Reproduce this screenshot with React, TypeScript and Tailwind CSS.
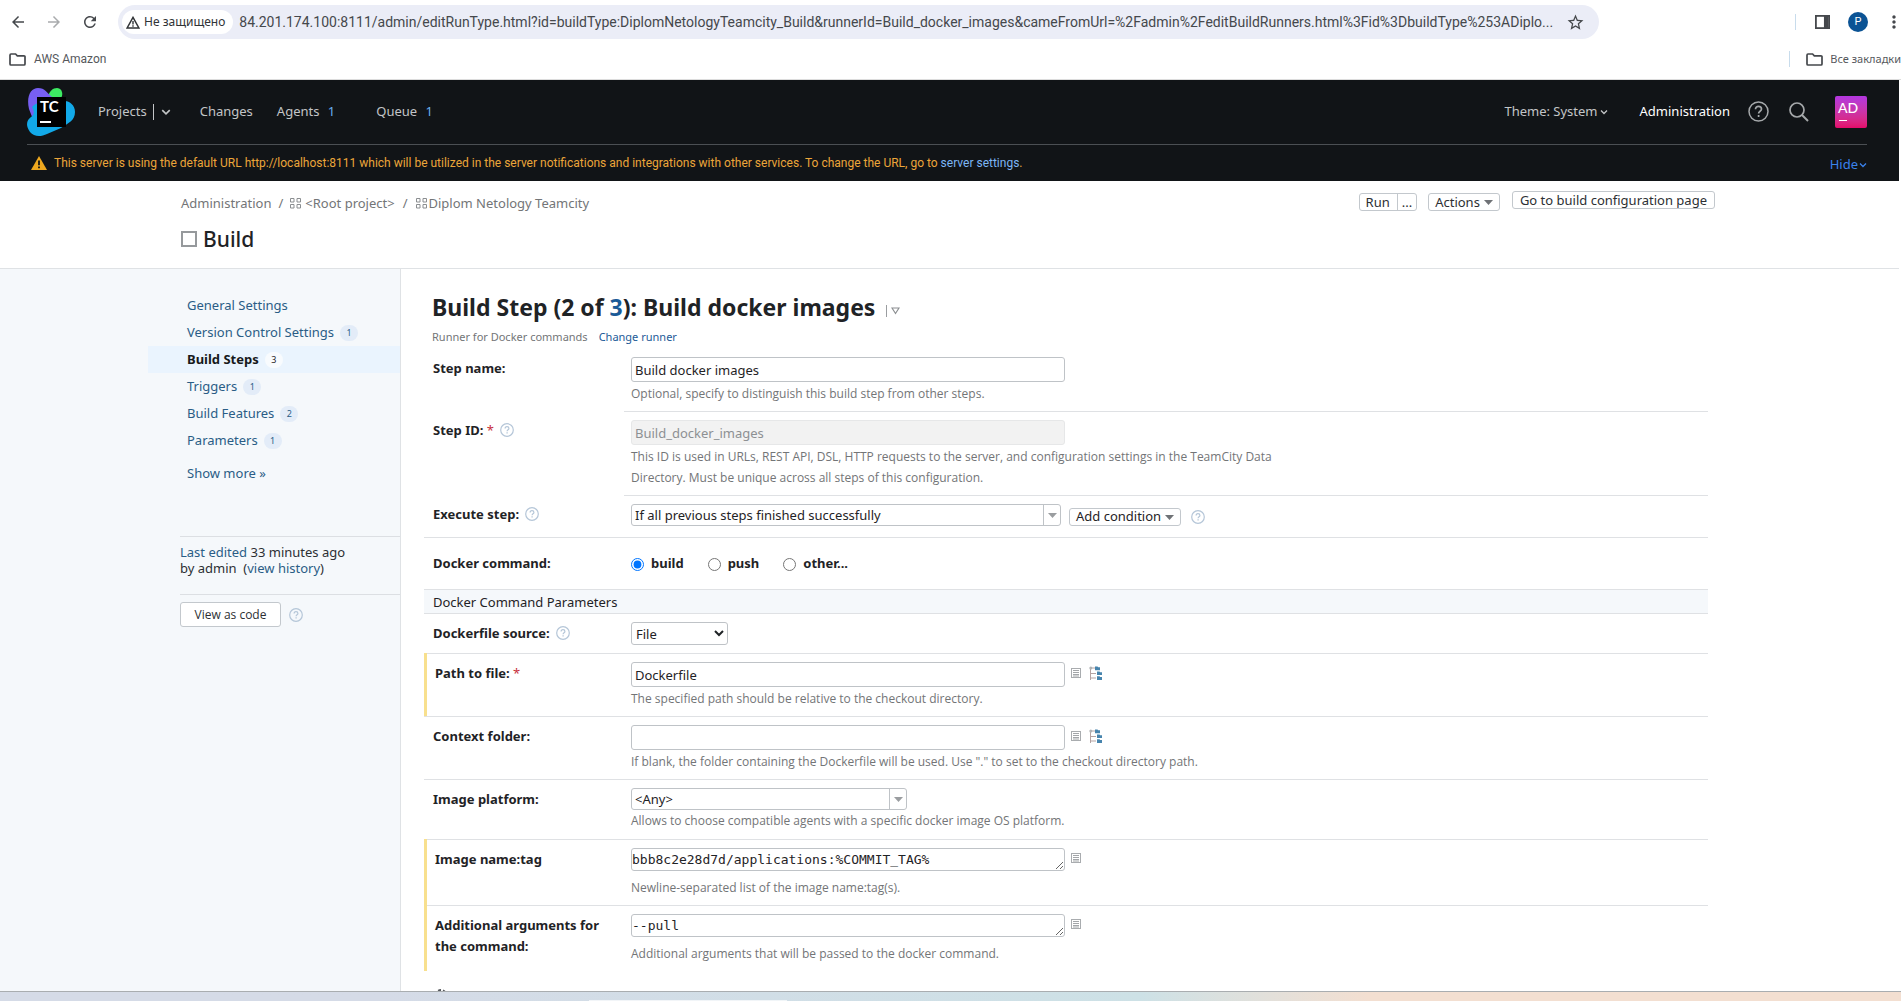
import type { ReactNode } from "react";
import { MdArrowBack, MdArrowForward, MdRefresh, MdStarBorder, MdMoreVert } from "react-icons/md";

const HINT = "font-['Open_Sans',sans-serif] text-[12px] leading-[21px] text-[#737577]";
const LINK = "text-[#2a5d86]";
const FIELD = "rounded-[3px] border border-[#bfc3c7] bg-white text-[13px] text-[#1f2326]";

function Help({ className = "" }: { className?: string }) {
  return (
    <button type="button" aria-label="Help" className={`shrink-0 ${className}`}>
      <svg width="14" height="14" viewBox="0 0 14 14" fill="none" stroke="#b5c6d8" className="block">
        <circle cx="7" cy="7" r="6.3" strokeWidth="1.2" />
        <path d="M5.1 5.6C5.1 4.4 5.9 3.7 7 3.7s1.9.7 1.9 1.7c0 1.3-1.8 1.4-1.8 2.8" strokeWidth="1.2" />
        <path d="M7.1 9.3v1.3" strokeWidth="1.3" />
      </svg>
    </button>
  );
}

function Warning({ className = "" }: { className?: string }) {
  return (
    <svg width="14" height="13" viewBox="0 0 14 13" fill="none" stroke="currentColor" className={`shrink-0 ${className}`}>
      <path d="M7 1.4 12.9 12H1.1Z" strokeWidth="1.5" strokeLinejoin="miter" />
      <path d="M7 5v3.4M7 9.3v1.4" strokeWidth="1.4" />
    </svg>
  );
}

function Folder() {
  return (
    <svg width="17" height="13" viewBox="0 0 17 13" fill="none" stroke="#45484c" strokeWidth="1.7" className="shrink-0">
      <path d="M1 2.2V11c0 .6.4 1 1 1h13c.6 0 1-.4 1-1V3.8c0-.6-.4-1-1-1H8.3L6.6 1H2c-.6 0-1 .5-1 1.2Z" />
    </svg>
  );
}

function Chevron({ size = 8, className = "" }: { size?: number; className?: string }) {
  return (
    <svg width={size} height={size} viewBox="0 0 8 8" fill="none" stroke="currentColor" strokeWidth="1.3" className={className}>
      <path d="m1 2.5 3 3 3-3" />
    </svg>
  );
}

function Caret({ className = "" }: { className?: string }) {
  return (
    <svg width="9" height="5" viewBox="0 0 9 5" fill="currentColor" className={className}>
      <path d="M0 0h9L4.5 5Z" />
    </svg>
  );
}

function Grid() {
  return (
    <svg width="12" height="11" viewBox="0 0 12 11" fill="none" stroke="#8b8e91" className="shrink-0">
      <path d="M.5.5h3.5v3.5H.5ZM7 .5h3.5v3.5H7ZM.5 6.5h3.5V10H.5ZM7 6.5h3.5V10H7Z" />
    </svg>
  );
}

function Logo() {
  return (
    <svg width="49" height="49" viewBox="0 0 49 49" role="img" aria-label="TeamCity" className="block">
      <path d="M20 11C22 3 26 0 30 0c4 0 6 4 5 8l-3 7-12-1Z" fill="#3dea62" />
      <path d="M2 21C-1 8 4 0 11 0c7 0 9 5 14 9l-4 14L7 34Z" fill="#775ff2" />
      <path d="M5 19C9 14 14 15 20 13l14 0c8-1 14 4 14 11 0 9-7 11-14 16l-14 6c-6 3-13 3-17-2-5-7-3-12 1-15 4-3 3-6 1-10Z" fill="#12a9e8" />
      <rect x="10" y="9" width="29" height="30" fill="#000" />
      <text x="13" y="24" fill="#fff" fontSize="15" fontWeight="700" fontFamily="Lato, sans-serif">TC</text>
      <rect x="13" y="33" width="11" height="2" fill="#fff" />
    </svg>
  );
}

function ListIcon() {
  return (
    <button type="button" aria-label="Insert parameter" className="shrink-0">
      <svg width="10" height="10" viewBox="0 0 10 10" fill="none" stroke="#8b8f93" className="block">
        <rect x=".5" y=".5" width="9" height="9" stroke="#a9acaf" />
        <path d="M2 2.5h6M2 4.5h6M2 6.5h6M2 8h6" strokeWidth=".8" />
      </svg>
    </button>
  );
}

function TreeIcon() {
  return (
    <button type="button" aria-label="Browse files" className="shrink-0">
      <svg width="14" height="15" viewBox="0 0 14 15" className="block">
        <path d="M1.500 3v11M1.5 7.500H7M1.500 12H7M1.500 2H6" stroke="#b5a3a2" fill="none" />
        <circle cx="1.800" cy="2" r="1.500" fill="#b0b3b5" />
        <path d="M6 .5h2.500l.7.8H11V4.300H6ZM8 5.400h2.500l.7.8H13V9H8ZM8 10.300h2.500l.7.8H13V14H8Z" fill="#4784ad" />
      </svg>
    </button>
  );
}

function Toolbar() {
  return (
    <header className="shrink-0 overflow-hidden border-b border-[#dcdcdc] bg-white font-['Roboto',sans-serif] text-[#45484c]">
      <div className="flex h-[44px] items-center">
        <nav className="flex w-[118px] shrink-0 gap-[18px] pl-[9px]">
          <button aria-label="Back"><MdArrowBack size={18} /></button>
          <button aria-label="Forward" className="text-[#a9abad]"><MdArrowForward size={18} /></button>
          <button aria-label="Reload"><MdRefresh size={18} /></button>
        </nav>
        <div className="flex h-[34px] min-w-0 flex-[1480] items-center rounded-full bg-[#ebedf7] px-1">
          <button className="flex h-6 shrink-0 items-center gap-1 rounded-full bg-white px-1 pr-2 font-['Noto_Sans',sans-serif] text-[12px] text-[#303336]">
            <Warning />
            Не защищено
          </button>
          <input
            aria-label="Address"
            readOnly
            className="ml-[6px] min-w-0 flex-1 bg-transparent text-[14px] outline-none"
            defaultValue="84.201.174.100:8111/admin/editRunType.html?id=buildType:DiplomNetologyTeamcity_Build&runnerId=Build_docker_images&cameFromUrl=%2Fadmin%2FeditBuildRunners.html%3Fid%3DbuildType%253ADiplo..."
          />
          <button aria-label="Bookmark this page" className="mr-[10px]"><MdStarBorder size={19} /></button>
        </div>
        <div className="flex min-w-0 flex-[303] items-center justify-end">
          <span className="mr-[19px] h-4 w-px bg-[#c8dcec]" />
          <button aria-label="Side panel" className="mr-[18px]">
            <svg width="15" height="14" viewBox="0 0 15 14" fill="none" stroke="#45484c" strokeWidth="1.8" className="block">
              <rect x=".9" y=".9" width="13.2" height="12.2" />
              <path d="M11.2 1v12" strokeWidth="4.5" />
            </svg>
          </button>
          <button className="mr-4 size-5 rounded-full bg-[#0b5394] text-[11px] leading-5 text-white">P</button>
          <button aria-label="Menu" className="-mr-[3px]"><MdMoreVert size={20} /></button>
        </div>
      </div>
      <div className="flex h-[35px] items-start justify-between pt-[6px] font-['Noto_Sans',sans-serif] text-[11px] leading-[18px] text-[#55585c]">
        <a href="#aws" className="flex items-center gap-2 pl-[9px] text-[12px] font-['Roboto',sans-serif]"><Folder />AWS Amazon</a>
        <a href="#all" className="flex shrink-0 items-center gap-[7px]"><span className="mr-[9px] h-4 w-px bg-[#c8dcec]" /><Folder />Все закладки</a>
      </div>
    </header>
  );
}

function AppHeader() {
  return (
    <header className="bg-[#111417] pr-8 pl-[27px] text-[13px] text-[#c3c5c7]">
      <div className="flex h-[65px] items-center border-b border-[#4b4f53]">
        <a href="#home" className="mr-[22px]"><Logo /></a>
        <nav className="flex items-center pb-px">
          <a href="#projects">Projects</a>
          <button aria-label="Choose project" className="ml-[6px] flex h-4 items-center border-l border-[#c3c5c7] pl-[7px]"><Chevron size={10} /></button>
          <a href="#changes" className="ml-[29px]">Changes</a>
          <a href="#agents" className="ml-6">Agents <span className="ml-[5px] text-[#6aaef0]">1</span></a>
          <a href="#queue" className="ml-[41px]">Queue <span className="ml-[5px] text-[#6aaef0]">1</span></a>
        </nav>
        <div className="ml-auto flex items-center pb-px">
          <button className="flex items-center gap-[2px]">Theme: System<Chevron /></button>
          <a href="#admin" className="ml-8 text-white">Administration</a>
          <button aria-label="Help" className="ml-[18px]">
            <svg width="21" height="21" viewBox="0 0 21 21" fill="none" stroke="#a5a8aa" strokeWidth="1.5">
              <circle cx="10.5" cy="10.5" r="9.5" />
              <path d="M7.5 8.3c0-1.9 1.3-3 3-3s3 1.100 3 2.700c0 2.200-2.900 2.200-2.900 4.400M10.600 14v2" strokeWidth="1.700" />
            </svg>
          </button>
          <button aria-label="Search" className="ml-5">
            <svg width="20" height="20" viewBox="0 0 20 20" fill="none" stroke="#a5a8aa" strokeWidth="1.7">
              <circle cx="8" cy="8" r="7" />
              <path d="m13 13 6 6" strokeWidth="2" />
            </svg>
          </button>
          <button className="ml-[26px] flex size-8 flex-col items-start rounded-[2px] bg-linear-to-b from-[#b336e0] to-[#e4086a] pt-[5px] pl-[3px] font-['Lato',sans-serif] text-[14px] leading-[14px] font-medium text-white">
            AD
            <span className="mt-[5px] ml-px h-px w-2 bg-white" />
          </button>
        </div>
      </div>
      <div className="flex h-[36px] items-center justify-between">
        <p className="flex items-center gap-[7px] pl-1 font-['Roboto',sans-serif] text-[12px] text-[#eca63a]">
          <svg width="16" height="14" viewBox="0 0 16 14">
            <path d="M8 0 16 14H0Z" fill="#eea81f" />
            <path d="M8 4.5v4.7M8 10.5v1.8" stroke="#111417" strokeWidth="1.8" />
          </svg>
          <span>
            This server is using the default URL http://localhost:8111 which will be utilized in the server notifications and integrations with other services. To change the URL, go to <a href="#server" className="text-[#7db6f5]">server settings</a>.
          </span>
        </p>
        <button className="flex items-center gap-px pt-[3px] text-[#3a82ec]">Hide<Chevron /></button>
      </div>
    </header>
  );
}

function Heading() {
  const button = "rounded-[3px] border border-[#c3c8cd] leading-[16px]";
  return (
    <section className="flex h-[88px] items-start justify-between border-b border-[#dfe2e5] pr-[184px] pl-[181px] text-[13px]">
      <div>
        <nav className="flex items-center pt-[12px] leading-5 text-[#737577]">
          <a href="#administration">Administration</a>
          <span className="mx-[7px]">/</span>
          <Grid /><a href="#root" className="ml-[3px]">&lt;Root project&gt;</a>
          <span className="mx-2">/</span>
          <Grid /><a href="#diplom" className="ml-px">Diplom Netology Teamcity</a>
        </nav>
        <h1 className="mt-[12px] flex items-center gap-[6px] text-[21px] leading-[28px] font-medium text-[#1f2326]">
          <span className="size-4 border-2 border-[#96999c]" />Build
        </h1>
      </div>
      <div className="flex items-start pt-[10px] text-[#2c2f33]">
        <div className={`${button} mt-[2px] flex`}>
          <button className="pr-[7px] pl-[6px]">Run</button>
          <button aria-label="Run custom build" className="border-l border-[#c3c8cd] px-1">...</button>
        </div>
        <button className={`${button} mt-[2px] ml-[11px] flex items-center gap-1 px-[6px]`}>Actions<Caret className="text-[#6f7276]" /></button>
        <button className={`${button} ml-[12px] px-[7px]`}>Go to build configuration page</button>
      </div>
    </section>
  );
}

const MENU: [string, string?][] = [
  ["General Settings"],
  ["Version Control Settings", "1"],
  ["Build Steps", "3"],
  ["Triggers", "1"],
  ["Build Features", "2"],
  ["Parameters", "1"],
];

function Sidebar() {
  return (
    <aside className="w-[401px] shrink-0 border-r border-[#dfe2e5] bg-[#f5f8fb] pt-[23px] text-[13px]">
      <nav className="ml-[148px]">
        <ul>
          {MENU.map(([label, count]) => {
            const active = label === "Build Steps";
            return (
              <li key={label} className={active ? "bg-[#eaf4fe]" : ""}>
                <a href="#menu" className={`flex h-[27px] items-center gap-[6px] pl-[39px] ${active ? "font-bold text-[#17191b]" : LINK}`}>
                  {label}
                  {count && <span className={`w-[18px] rounded-full text-center text-[9px] leading-4 font-normal ${active ? "bg-[#f8fbfe] text-[#1f2326]" : "bg-[#e3ecf8]"}`}>{count}</span>}
                </a>
              </li>
            );
          })}
        </ul>
        <a href="#more" className={`mt-[7px] block pl-[39px] leading-[24px] ${LINK}`}>Show more »</a>
      </nav>
      <p className="mt-[51px] ml-[180px] h-[58px] border-t border-[#dcdfe3] pt-[7px] leading-[16px] text-[#2c2f33]">
        <a href="#edited" className={LINK}>Last edited</a> 33 minutes ago<br />by admin &nbsp;(<a href="#history" className={LINK}>view history</a>)
      </p>
      <div className="ml-[180px] flex items-center gap-2 border-t border-[#dcdfe3] pt-[7px]">
        <button className="h-[25px] w-[101px] rounded-[3px] border border-[#c3c8cd] bg-white font-['Open_Sans',sans-serif] text-[12px] text-[#2c2f33]">View as code</button>
        <Help />
      </div>
    </aside>
  );
}

type RowProps = { label: ReactNode; htmlFor?: string; line?: "full" | "field" | "none"; changed?: boolean; help?: boolean; required?: boolean; className?: string; children: ReactNode };

function Row({ label, htmlFor, line = "full", changed, help, required, className = "pb-[7px]", children }: RowProps) {
  const full = line === "full" ? "border-t border-[#dfe1e4]" : "";
  const part = line === "field" ? "border-t border-[#dfe1e4]" : "";
  return (
    <div className={`relative flex ${full}`}>
      {changed && <span className="absolute -top-px bottom-0 left-0 w-[3px] bg-[#f8e08e]" />}
      <div className={`flex w-[200px] shrink-0 items-start pt-[9px] font-bold text-[#1f2326] ${changed ? "pl-[11px]" : "pl-[9px]"}`}>
        <label htmlFor={htmlFor} className="leading-[21px]">{label}{required && <span className="font-normal text-[#c7303c]"> *</span>}</label>
        {help && <Help className="mt-[3px] ml-[6px]" />}
      </div>
      <div className={`min-w-0 flex-1 pt-2 pl-[7px] ${part} ${className}`}>{children}</div>
    </div>
  );
}

function Combo({ id, value, className }: { id: string; value: string; className: string }) {
  return (
    <div className={`flex h-[22px] ${FIELD} ${className}`}>
      <input id={id} defaultValue={value} className="min-w-0 flex-1 pt-[2px] pl-[3px] outline-none" />
      <button type="button" aria-label="Open list" className="flex w-[17px] items-center justify-center border-l border-[#bfc3c7]"><Caret className="text-[#9a9da0]" /></button>
    </div>
  );
}

function TextField({ id, value, icons, disabled }: { id: string; value: string; icons?: boolean; disabled?: boolean }) {
  return (
    <div className="mb-px flex items-center">
      <input id={id} defaultValue={value} disabled={disabled} className={`h-[25px] w-[434px] pl-[3px] ${disabled ? "rounded-[3px] border border-[#e6e7e8] bg-[#f2f2f2] text-[13px] text-[#8d9093]" : FIELD}`} />
      {icons && <div className="mb-[3px] ml-[6px] flex items-center gap-[8px]"><ListIcon /><TreeIcon /></div>}
    </div>
  );
}

function Area({ id, value }: { id: string; value: string }) {
  return (
    <div className="mb-[6px] flex items-center">
      <textarea id={id} defaultValue={value} rows={1} className={`block h-[23px] w-[434px] resize overflow-hidden font-['DejaVu_Sans_Mono',monospace] text-[12px] leading-[21px] ${FIELD}`} />
      <div className="mb-[2px] ml-[6px]"><ListIcon /></div>
    </div>
  );
}

function StepForm() {
  return (
    <main className="min-w-0 flex-1 pt-[21px] pr-[191px] pl-[23px] text-[13px] text-[#1f2326]">
      <div className="flex items-center pl-2">
        <h2 className="text-[23px] leading-[34px] font-bold">
          Build Step (2 of <a href="#steps" className="text-[#1b5a97]">3</a>): Build docker images
        </h2>
        <button aria-label="Step actions" className="mt-[8px] ml-[11px] flex h-3 items-center border-l border-[#9a9da0] pl-[4px] text-[#8b8e91]">
          <svg width="9" height="8" viewBox="0 0 9 8" fill="none" stroke="currentColor"><path d="M1 1h7L4.5 6.5Z" strokeWidth="1.2" /></svg>
        </button>
      </div>
      <p className="flex gap-[11px] pt-px pb-px pl-2 text-[11px] leading-[23px] text-[#737577]">
        Runner for Docker commands <a href="#change" className="text-[#1b5a97]">Change runner</a>
      </p>
      <form>
        <Row label="Step name:" htmlFor="name" line="none">
          <TextField id="name" value="Build docker images" />
          <p className={HINT}>Optional, specify to distinguish this build step from other steps.</p>
        </Row>
        <Row label="Step ID:" htmlFor="stepid" line="field" required help>
          <TextField id="stepid" value="Build_docker_images" disabled />
          <p className={`${HINT} max-w-[650px]`}>This ID is used in URLs, REST API, DSL, HTTP requests to the server, and configuration settings in the TeamCity Data Directory. Must be unique across all steps of this configuration.</p>
        </Row>
        <Row label="Execute step:" htmlFor="execute" line="field" help className="flex pb-[11px]">
          <Combo id="execute" value="If all previous steps finished successfully" className="w-[430px]" />
          <button type="button" className="mt-1 ml-[8px] flex h-[18px] items-center gap-1 rounded-[3px] border border-[#c3c8cd] px-[6px]">Add condition<Caret className="text-[#6f7276]" /></button>
          <Help className="mt-[6px] ml-[10px] self-start" />
        </Row>
        <fieldset className="flex h-[52px] items-center border-t border-[#dfe1e4] pt-px font-bold">
          <legend className="float-left w-[207px] pl-[9px]">Docker command:</legend>
          {["build", "push", "other..."].map((name) => (
            <label key={name} className="mr-6 flex items-center gap-[7px]">
              <input type="radio" name="command" defaultChecked={name === "build"} className="size-[13px]" />{name}
            </label>
          ))}
        </fieldset>
        <h3 className="border-t border-[#dfe1e4] bg-[#f5f8fb] pt-px pl-[9px] leading-[22px]">Docker Command Parameters</h3>
        <Row label="Dockerfile source:" htmlFor="source" help className="pb-2">
          <select id="source" className={`block h-[23px] w-[97px] ${FIELD}`}><option>File</option></select>
        </Row>
        <Row label="Path to file:" htmlFor="path" changed required>
          <TextField id="path" value="Dockerfile" icons />
          <p className={HINT}>The specified path should be relative to the checkout directory.</p>
        </Row>
        <Row label="Context folder:" htmlFor="context">
          <TextField id="context" value="" icons />
          <p className={HINT}>If blank, the folder containing the Dockerfile will be used. Use "." to set to the checkout directory path.</p>
        </Row>
        <Row label="Image platform:" htmlFor="platform" className="pb-2">
          <Combo id="platform" value="<Any>" className="w-[276px]" />
          <p className={HINT}>Allows to choose compatible agents with a specific docker image OS platform.</p>
        </Row>
        <Row label="Image name:tag" htmlFor="tag" changed>
          <Area id="tag" value="bbb8c2e28d7d/applications:%COMMIT_TAG%" />
          <p className={HINT}>Newline-separated list of the image name:tag(s).</p>
        </Row>
        <Row label="Additional arguments for the command:" htmlFor="args" changed>
          <Area id="args" value="--pull" />
          <p className={HINT}>Additional arguments that will be passed to the docker command.</p>
        </Row>
        <div className="pt-[18px] pl-[11px]">
          <svg width="12" height="12" viewBox="0 0 12 12" fill="none" stroke="#55585c" strokeWidth="2" className="block"><circle cx="6" cy="6" r="5" strokeDasharray="3 2" /></svg>
        </div>
      </form>
    </main>
  );
}

export default function App() {
  return (
    <div className="flex h-screen flex-col overflow-hidden bg-white font-['Noto_Sans',sans-serif]">
      <Toolbar />
      <div className="mr-[2px] flex min-h-0 flex-1 flex-col overflow-hidden">
        <AppHeader />
        <Heading />
        <div className="flex min-h-0 flex-1 overflow-hidden">
          <Sidebar />
          <StepForm />
        </div>
      </div>
      <footer className="flex h-[10px] shrink-0 items-end border-t border-[#a9adb0] bg-linear-to-r from-[#d5dbe7] from-20% via-[#cde1e6] via-60% to-[#f3dfd1] to-72%">
        <span className="ml-[31%] h-px w-[198px] bg-white/70" />
      </footer>
    </div>
  );
}
